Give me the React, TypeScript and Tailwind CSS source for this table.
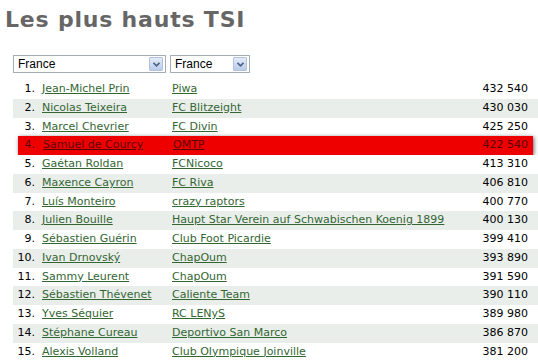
const rows = [
  { rank: 1, name: 'Jean-Michel Prin', club: 'Piwa', tsi: '432 540' },
  { rank: 2, name: 'Nicolas Teixeira', club: 'FC Blitzeight', tsi: '430 030' },
  { rank: 3, name: 'Marcel Chevrier', club: 'FC Divin', tsi: '425 250' },
  { rank: 4, name: 'Samuel de Courcy', club: 'OMTP', tsi: '422 540', mine: true },
  { rank: 5, name: 'Gaétan Roldan', club: 'FCNicoco', tsi: '413 310' },
  { rank: 6, name: 'Maxence Cayron', club: 'FC Riva', tsi: '406 810' },
  { rank: 7, name: 'Luís Monteiro', club: 'crazy raptors', tsi: '400 770' },
  { rank: 8, name: 'Julien Bouille', club: 'Haupt Star Verein auf Schwabischen Koenig 1899', tsi: '400 130' },
  { rank: 9, name: 'Sébastien Guérin', club: 'Club Foot Picardie', tsi: '399 410' },
  { rank: 10, name: 'Ivan Drnovský', club: 'ChapOum', tsi: '393 890' },
  { rank: 11, name: 'Sammy Leurent', club: 'ChapOum', tsi: '391 590' },
  { rank: 12, name: 'Sébastien Thévenet', club: 'Caliente Team', tsi: '390 110' },
  { rank: 13, name: 'Yves Séquier', club: 'RC LENyS', tsi: '389 980' },
  { rank: 14, name: 'Stéphane Cureau', club: 'Deportivo San Marco', tsi: '386 870' },
  { rank: 15, name: 'Alexis Volland', club: 'Club Olympique Joinville', tsi: '381 200' },
]

function FakeSelect({ value, width }: { value: string; width: string }) {
  return (
    <div
      className={`${width} h-[18px] flex items-center border border-[#a5acb5] bg-white pl-[4px] pr-[2px]`}
    >
      <span className="flex-1 text-[12px] leading-none text-black font-['Liberation_Sans',sans-serif]">
        {value}
      </span>
      <div className="w-[14px] h-[14px] flex items-center justify-center border border-[#b3c3df] rounded-[1px] bg-gradient-to-b from-[#e3ebf8] to-[#b9cbea]">
        <svg width="7" height="5" viewBox="0 0 7 5">
          <path d="M0.5 0.8 L3.5 3.8 L6.5 0.8" fill="none" stroke="#4d6185" strokeWidth="1.6" />
        </svg>
      </div>
    </div>
  )
}

export default function App() {
  return (
    <div className="w-[538px] h-[364px] overflow-hidden bg-white font-['DejaVu_Sans',Verdana,sans-serif]">
      <h1 className="pl-[5px] pt-[5px] text-[22px] leading-[29px] tracking-[0.8px] font-bold text-[#666666]">
        Les plus hauts TSI
      </h1>

      <div className="flex gap-[4px] pl-[13px] mt-[21px]">
        <FakeSelect value="France" width="w-[153px]" />
        <FakeSelect value="France" width="w-[80px]" />
      </div>

      <div className="ml-[13px] mt-[7px] text-[11px]">
        {rows.map((row) =>
          row.mine ? (
            <div
              key={row.rank}
              className="flex items-center h-[18.75px] mx-[5px] bg-[#ee0000] text-[#5e0000] shadow-[1px_1px_4px_rgba(0,0,0,0.6)]"
            >
              <span className="w-[17px] text-right">{row.rank}.</span>
              <span className="ml-[8px] w-[130px]">
                <span className="underline">{row.name}</span>
              </span>
              <span className="flex-1">
                <span className="underline">{row.club}</span>
              </span>
              <span className="pr-[5px] text-right">{row.tsi}</span>
            </div>
          ) : (
            <div
              key={row.rank}
              className={`flex items-center h-[18.75px] ${row.rank % 2 === 0 ? 'bg-[#eaeeeb]' : 'bg-white'}`}
            >
              <span className="w-[22px] text-right text-black">{row.rank}.</span>
              <span className="ml-[7px] w-[130px] text-[#336633]">
                <span className="underline">{row.name}</span>
              </span>
              <span className="flex-1 text-[#336633]">
                <span className="underline">{row.club}</span>
              </span>
              <span className="pr-[10px] text-right text-black">{row.tsi}</span>
            </div>
          )
        )}
      </div>
    </div>
  )
}
